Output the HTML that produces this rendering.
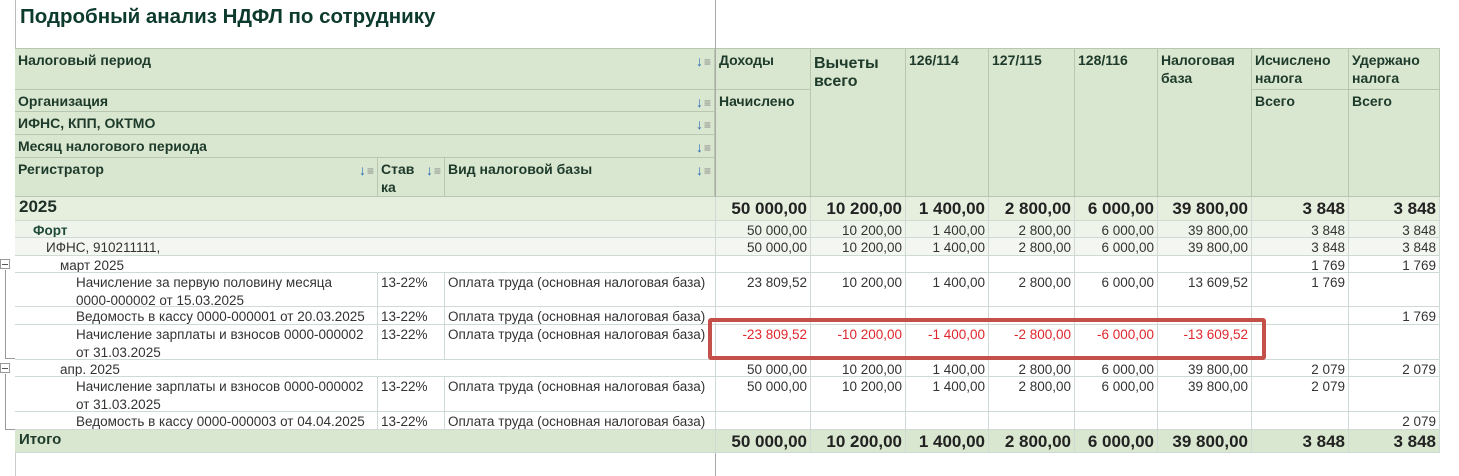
<!DOCTYPE html>
<html><head><meta charset="utf-8">
<style>
body{margin:0;width:1459px;height:476px;background:#fff;position:relative;overflow:hidden;font-family:"Liberation Sans Narrow","Liberation Sans",sans-serif;font-size:13.5px;color:#333}
.a{position:absolute;box-sizing:border-box}
.h{background:#d9e6d0;border-right:1px solid #b9c7b0;border-bottom:1px solid #b9c7b0;font-weight:bold;color:#1d3a2a;padding:2px 3px;line-height:18px;font-size:14px}
.c{border-right:1px solid #cfdad6;border-bottom:1px solid #cfdad6;padding:1px 3px;line-height:18px;white-space:nowrap;overflow:hidden}
.n{text-align:right}
.s{position:absolute;right:3px;top:3px;font-size:14px;color:#2a6db3;font-weight:bold}
.s i{color:#888;font-style:normal;font-weight:normal;margin-left:1px;font-size:12px}
.red{color:#e0262c}
</style></head><body>
<div class="a" style="left:15px;top:0;width:701px;height:48px;border-left:1px solid #bbb;border-right:1px solid #bbb"></div>
<div class="a" style="left:20px;top:5px;font-family:'Liberation Sans',sans-serif;font-size:20.5px;font-weight:bold;color:#0c3a2c">Подробный анализ НДФЛ по сотруднику</div>
<div class="a" style="left:715px;top:0;width:1px;height:476px;background:#aaa"></div>

<div class="a h" style="left:15px;top:48px;width:700px;height:42px;border-top:1px solid #b9c7b0">Налоговый период<span class="s">↓<i>≡</i></span></div>
<div class="a h" style="left:15px;top:90px;width:700px;height:22px">Организация<span class="s">↓<i>≡</i></span></div>
<div class="a h" style="left:15px;top:112px;width:700px;height:23px">ИФНС, КПП, ОКТМО<span class="s">↓<i>≡</i></span></div>
<div class="a h" style="left:15px;top:135px;width:700px;height:23px">Месяц налогового периода<span class="s">↓<i>≡</i></span></div>
<div class="a h" style="left:15px;top:158px;width:363px;height:39px">Регистратор<span class="s">↓<i>≡</i></span></div>
<div class="a h" style="left:378px;top:158px;width:67px;height:39px">Став<br>ка<span class="s">↓<i>≡</i></span></div>
<div class="a h" style="left:445px;top:158px;width:270px;height:39px">Вид налоговой базы<span class="s">↓<i>≡</i></span></div>
<div class="a h" style="left:716px;top:48px;width:95px;height:42px;border-top:1px solid #b9c7b0">Доходы</div>
<div class="a h" style="left:716px;top:90px;width:95px;height:107px">Начислено</div>
<div class="a h" style="left:811px;top:48px;width:95px;height:149px;border-top:1px solid #b9c7b0;font-size:16px;padding-top:6px">Вычеты<br>всего</div>
<div class="a h" style="left:906px;top:48px;width:83px;height:149px;border-top:1px solid #b9c7b0">126/114</div>
<div class="a h" style="left:989px;top:48px;width:86px;height:149px;border-top:1px solid #b9c7b0">127/115</div>
<div class="a h" style="left:1075px;top:48px;width:83px;height:149px;border-top:1px solid #b9c7b0">128/116</div>
<div class="a h" style="left:1158px;top:48px;width:94px;height:149px;border-top:1px solid #b9c7b0">Налоговая<br>база</div>
<div class="a h" style="left:1252px;top:48px;width:97px;height:42px;border-top:1px solid #b9c7b0">Исчислено<br>налога</div>
<div class="a h" style="left:1252px;top:90px;width:97px;height:107px">Всего</div>
<div class="a h" style="left:1349px;top:48px;width:91px;height:42px;border-top:1px solid #b9c7b0">Удержано<br>налога</div>
<div class="a h" style="left:1349px;top:90px;width:91px;height:107px">Всего</div>

<div id="rows"></div>
<script>
var cols=[716,811,906,989,1075,1158,1252,1349,1440];
var rows=[
 [197,24,'#e6efde','2025',null,null,['50 000,00','10 200,00','1 400,00','2 800,00','6 000,00','39 800,00','3 848','3 848'],'big',4],
 [221,17,'#eef4e9','Форт',null,null,['50 000,00','10 200,00','1 400,00','2 800,00','6 000,00','39 800,00','3 848','3 848'],'mid',18],
 [238,18,'#f4f7f1','ИФНС, 910211111,',null,null,['50 000,00','10 200,00','1 400,00','2 800,00','6 000,00','39 800,00','3 848','3 848'],'',31],
 [256,17,'#fff','март 2025',null,null,['','','','','','','1 769','1 769'],'',45],
 [273,34,'#fff','Начисление за первую половину месяца<br>0000-000002 от 15.03.2025','13-22%','Оплата труда (основная налоговая база)',['23 809,52','10 200,00','1 400,00','2 800,00','6 000,00','13 609,52','1 769',''],'',61],
 [307,18,'#fff','Ведомость в кассу 0000-000001 от 20.03.2025','13-22%','Оплата труда (основная налоговая база)',['','','','','','','','1 769'],'',61],
 [325,35,'#fff','Начисление зарплаты и взносов 0000-000002<br>от 31.03.2025','13-22%','Оплата труда (основная налоговая база)',['-23 809,52','-10 200,00','-1 400,00','-2 800,00','-6 000,00','-13 609,52','',''],'red',61],
 [360,17,'#fff','апр. 2025',null,null,['50 000,00','10 200,00','1 400,00','2 800,00','6 000,00','39 800,00','2 079','2 079'],'',45],
 [377,35,'#fff','Начисление зарплаты и взносов 0000-000002<br>от 31.03.2025','13-22%','Оплата труда (основная налоговая база)',['50 000,00','10 200,00','1 400,00','2 800,00','6 000,00','39 800,00','2 079',''],'',61],
 [412,18,'#fff','Ведомость в кассу 0000-000003 от 04.04.2025','13-22%','Оплата труда (основная налоговая база)',['','','','','','','','2 079'],'',61],
 [430,23,'#d9e6d0','Итого',null,null,['50 000,00','10 200,00','1 400,00','2 800,00','6 000,00','39 800,00','3 848','3 848'],'big',4]
];
var h='';
rows.forEach(function(r){
 var y=r[0],ht=r[1],bg=r[2],st=r[7],ind=r[8];
 var fs=st=='big'?'font-size:17px;font-weight:bold;color:#1d2f26;':(st=='mid'?'font-weight:bold;color:#1f4a3a;':'');
 if(r[3]=='Итого')fs='font-size:15px;font-weight:bold;color:#1d3a2a;';
 var valfs=st=='big'?'font-size:17px;font-weight:bold;color:#222;padding-top:3px;':'';
 var b='background:'+bg+';';
 if(r[4]===null){
  h+='<div class="a c" style="'+b+'left:15px;top:'+y+'px;width:701px;height:'+ht+'px;padding-left:'+ind+'px;'+fs+'">'+r[3]+'</div>';
 } else {
  h+='<div class="a c" style="'+b+'left:15px;top:'+y+'px;width:363px;height:'+ht+'px;padding-left:'+ind+'px">'+r[3]+'</div>';
  h+='<div class="a c" style="'+b+'left:378px;top:'+y+'px;width:67px;height:'+ht+'px">'+r[4]+'</div>';
  h+='<div class="a c" style="'+b+'left:445px;top:'+y+'px;width:271px;height:'+ht+'px">'+r[5]+'</div>';
 }
 for(var i=0;i<8;i++){
  h+='<div class="a c n'+(st=='red'?' red':'')+'" style="'+b+valfs+'left:'+cols[i]+'px;top:'+y+'px;width:'+(cols[i+1]-cols[i])+'px;height:'+ht+'px">'+r[6][i]+'</div>';
 }
});
document.getElementById('rows').innerHTML=h;
</script>
<div class="a" style="left:0;top:259px;width:10px;height:10px;border:1px solid #999;background:#fff"></div>
<div class="a" style="left:2px;top:264px;width:6px;height:1px;background:#555"></div>
<div class="a" style="left:5px;top:270px;width:10px;height:89px;border-left:1px solid #999;border-bottom:1px solid #999"></div>
<div class="a" style="left:0;top:363px;width:10px;height:10px;border:1px solid #999;background:#fff"></div>
<div class="a" style="left:2px;top:368px;width:6px;height:1px;background:#555"></div>
<div class="a" style="left:5px;top:374px;width:10px;height:56px;border-left:1px solid #999;border-bottom:1px solid #999"></div>
<div class="a" style="left:15px;top:453px;width:1px;height:23px;background:#ccc"></div>
<div class="a" style="left:708px;top:318px;width:558px;height:42px;border:4px solid #c4504a;border-radius:3px"></div>
</body></html>
